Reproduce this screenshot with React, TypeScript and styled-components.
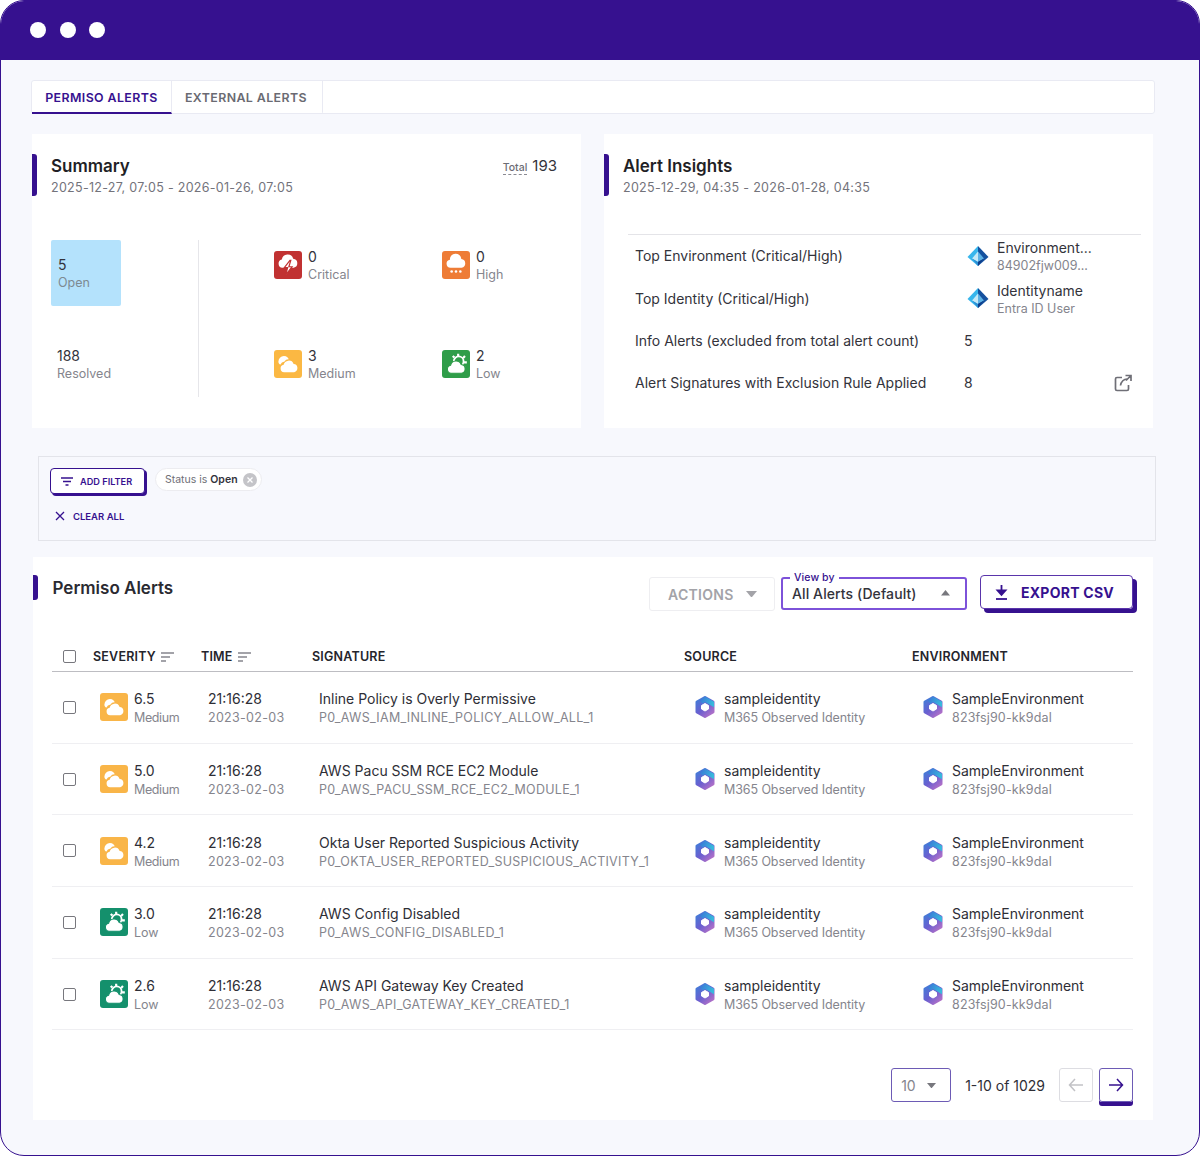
import React from 'react';
import styled, { createGlobalStyle } from 'styled-components';

const PURPLE = '#36118f';

const GlobalStyle = createGlobalStyle`
  html, body { margin: 0; padding: 0; background: #fff; }
  * { box-sizing: border-box; }
  body { font-family: Inter, 'Noto Sans', sans-serif; color: #2b2b33; }
`;

const Frame = styled.div`
  width: 1200px;
  height: 1156px;
  border: 1.5px solid ${PURPLE};
  border-radius: 24px;
  overflow: hidden;
  background: #f7f8fd;
`;

const TitleBar = styled.div`
  height: 59px;
  background: ${PURPLE};
  display: flex;
  align-items: center;
  gap: 13.5px;
  padding: 0 0 2px 29px;
`;

const Dot = styled.span`
  width: 16px;
  height: 16px;
  border-radius: 50%;
  background: #fff;
`;

const Content = styled.div`
  padding: 20px 44px 0 30px;
  display: flex;
  flex-direction: column;
`;

const TabBar = styled.div`
  height: 34px;
  display: flex;
  background: #fff;
  border: 1.5px solid #e9eaf3;
  border-radius: 3px;
`;

const Tab = styled.div<{ $active?: boolean; $width: number }>`
  width: ${({ $width }) => $width}px;
  display: flex;
  align-items: center;
  justify-content: center;
  padding: 2px ${({ $active }) => ($active ? 0 : 2)}px 0 0;
  font-size: 12.4px;
  font-weight: 600;
  letter-spacing: 0.4px;
  color: ${({ $active }) => ($active ? PURPLE : '#6a6a72')};
  border-right: 1.5px solid #e9eaf3;
  border-bottom: 2px solid ${({ $active }) => ($active ? PURPLE : 'transparent')};
  margin-bottom: -1px;
`;

const CardRow = styled.div`
  display: flex;
  gap: 23px;
  margin-top: 20px;
  padding-left: 1px;
`;

const Card = styled.section`
  width: 549px;
  height: 294px;
  background: #fff;
  padding-top: 20px;
  display: flex;
  flex-direction: column;
`;

const CardHead = styled.div`
  display: flex;
  align-items: flex-start;
  padding-right: 24px;
`;

const Accent = styled.span<{ $h?: number }>`
  width: 5px;
  height: ${({ $h }) => $h ?? 42}px;
  background: ${PURPLE};
  border-radius: 0 3px 3px 0;
  flex: none;
`;

const HeadText = styled.div`
  margin-left: 14px;
  flex: 1;
`;

const CardTitle = styled.h2`
  margin: 0;
  font-size: 17px;
  line-height: 24px;
  font-weight: 600;
  color: #1f1f26;
`;

const DateRange = styled.div`
  margin-top: 1px;
  font-size: 12.5px;
  line-height: 18px;
  color: #73737b;
  letter-spacing: 0.29px;
`;

const Total = styled.div`
  display: flex;
  align-items: baseline;
  gap: 5px;
  font-size: 15px;
  line-height: 24px;
  color: #33333b;
`;

const TotalLabel = styled.span`
  font-size: 10.5px;
  font-weight: 500;
  color: #6d6d75;
  border-bottom: 1px dashed #8a8a92;
  line-height: 12px;
`;

const SummaryBody = styled.div`
  display: flex;
  margin-top: 43px;
  padding-left: 19px;
`;

const StatusCol = styled.div`
  width: 148px;
  height: 157px;
  border-right: 1px solid #e6e6ea;
  display: flex;
  flex-direction: column;
  justify-content: space-between;
`;

const StatusBox = styled.div<{ $active?: boolean }>`
  width: 70px;
  height: ${({ $active }) => ($active ? '66px' : 'auto')};
  padding: ${({ $active }) => ($active ? '16px 7px' : '0 6px 14px')};
  background: ${({ $active }) => ($active ? '#b4e2fc' : 'transparent')};
  border-radius: 2px;
`;

const Big = styled.div`
  font-size: 14px;
  line-height: 18px;
  color: #33333b;
`;

const Small = styled.div<{ $dark?: boolean }>`
  font-size: 12.5px;
  line-height: 18px;
  color: ${({ $dark }) => ($dark ? '#7d8a92' : '#85858d')};
`;

const SeverityGrid = styled.div`
  display: grid;
  grid-template-columns: 168px 130px;
  grid-auto-rows: 99px;
  padding: 8px 0 0 75px;
`;

const SeverityItem = styled.div`
  display: flex;
  gap: 6px;
  height: 38px;
`;

const SeverityIconSlot = styled.div`
  padding-top: 3px;
`;

const IconBox = styled.span<{ $color: string }>`
  width: 28px;
  height: 28px;
  border-radius: 3px;
  background: ${({ $color }) => $color};
  display: flex;
  align-items: center;
  justify-content: center;
  flex: none;
`;

const InsightList = styled.div`
  margin: 37px 12px 0 24px;
  border-top: 1px solid #e4e4e8;
  display: flex;
  flex-direction: column;
`;

const InsightRow = styled.div`
  height: 42.4px;
  display: grid;
  grid-template-columns: 329px 1fr auto;
  align-items: center;
  padding: 0 9px 1px 7px;
  font-size: 14px;
  color: #33333b;
`;

const InsightValue = styled.div`
  display: flex;
  align-items: center;
  gap: 7px;
  padding-left: 2px;
`;

const EntityText = styled.div`
  padding-top: 3px;
`;

const EntityName = styled.div`
  font-size: 14px;
  line-height: 18px;
  color: #33333b;
`;

const FilterBox = styled.div`
  margin: 28px -1px 0 7px;
  height: 85px;
  border: 1.5px solid #e3e4ea;
  padding: 11px 11px 0;
  display: flex;
  flex-direction: column;
`;

const FilterTop = styled.div`
  display: flex;
  gap: 10px;
`;

const AddFilter = styled.button`
  width: 95px;
  height: 26px;
  padding: 0 0 0 10px;
  border: 1.5px solid ${PURPLE};
  border-radius: 4px;
  box-shadow: 2px 2px 0 ${PURPLE};
  background: #fff;
  display: flex;
  align-items: center;
  gap: 7px;
  font: 600 9.2px Inter, sans-serif;
  color: ${PURPLE};
`;

const Chip = styled.div`
  width: 107px;
  height: 23px;
  border: 1.5px solid #ececf0;
  border-radius: 12px;
  background: #fff;
  display: flex;
  align-items: center;
  justify-content: space-between;
  padding: 0 4px 0 9px;
  font-size: 10.5px;
  color: #6f6f77;
  b { color: #33333b; font-weight: 600; }
`;

const ClearAll = styled.div`
  margin: 15px 0 0 5px;
  display: flex;
  align-items: center;
  gap: 8px;
  font-size: 9.5px;
  font-weight: 600;
  color: ${PURPLE};
  height: 14px;
`;

const AlertsCard = styled.section`
  margin: 16px 0 0 2px;
  width: 1120px;
  height: 563px;
  background: #fff;
  display: flex;
  flex-direction: column;
`;

const AlertsHead = styled.div`
  height: 54px;
  padding: 18px 20px 0 0;
  display: flex;
  align-items: flex-start;
`;

const AlertsTitle = styled.h2`
  margin: 0 0 0 14.5px;
  font-size: 17px;
  line-height: 26px;
  font-weight: 600;
  color: #2a2a31;
  flex: 1;
`;

const ActionsButton = styled.div`
  width: 126px;
  height: 34px;
  margin-top: 2px;
  border: 1.5px solid #eeeef1;
  border-radius: 3px;
  display: flex;
  align-items: center;
  justify-content: space-between;
  padding: 0 17px 0 18px;
  font-size: 14px;
  font-weight: 600;
  letter-spacing: 0.3px;
  color: #a3a3a8;
`;

const ViewBy = styled.div`
  position: relative;
  width: 186px;
  height: 33px;
  margin: 2px 13px 0 6px;
  border: 2px solid #7d52d9;
  border-radius: 3px;
  display: flex;
  align-items: center;
  justify-content: space-between;
  padding: 0 15px 1px 9px;
  font-size: 14px;
  font-weight: 500;
  letter-spacing: 0.1px;
  color: #33333b;
`;

const ViewByLabel = styled.span`
  position: absolute;
  left: 7px;
  top: -8px;
  padding: 0 4px;
  background: #fff;
  font-size: 10.5px;
  line-height: 13px;
  color: ${PURPLE};
`;

const ExportButton = styled.div`
  width: 153px;
  height: 34px;
  border: 1.5px solid #5a35ab;
  border-radius: 4px;
  box-shadow: 4px 4px 0 ${PURPLE};
  display: flex;
  align-items: center;
  gap: 13px;
  padding-left: 14px;
  font-size: 14px;
  font-weight: 700;
  letter-spacing: 0.25px;
  color: ${PURPLE};
`;

const Table = styled.div`
  margin: 0 20px 0 19px;
`;

const columns = '41px 108px 111px 372px 228px 1fr';

const HeadRow = styled.div`
  display: grid;
  grid-template-columns: ${columns};
  align-items: center;
  height: 61px;
  padding-top: 31px;
  border-bottom: 1.5px solid #bdbdc2;
  font-size: 12.5px;
  font-weight: 600;
  letter-spacing: 0.2px;
  color: #25252c;
`;

const HeadCell = styled.div`
  display: flex;
  align-items: center;
  gap: 5px;
`;

const CheckCell = styled.div`
  padding-left: 11px;
  display: flex;
  align-items: center;
`;

const CheckBox = styled.span`
  width: 13px;
  height: 13px;
  border: 1.5px solid #77777d;
  border-radius: 2px;
`;

const Row = styled.div`
  display: grid;
  grid-template-columns: ${columns};
  align-items: center;
  height: 71.7px;
  border-bottom: 1.5px solid #efeff2;
`;

const Cell = styled.div`
  padding-left: 7px;
  display: flex;
  align-items: center;
  min-width: 0;
`;

const ServiceCell = styled(Cell)`
  padding-left: 10px;
  gap: 8px;
`;

const SeverityCell = styled(Cell)`
  gap: 6px;
`;

const Primary = styled.div`
  margin-top: 3px;
  font-size: 14px;
  line-height: 18px;
  color: #2e2e36;
`;

const Secondary = styled.div<{ $spacing?: number }>`
  margin-top: 1px;
  font-size: 12.5px;
  line-height: 18px;
  letter-spacing: ${({ $spacing }) => $spacing ?? 0}px;
  color: #85858d;
  white-space: nowrap;
`;

const Pager = styled.div`
  display: flex;
  align-items: center;
  justify-content: flex-end;
  margin: 38px 20px 0 0;
  height: 34px;
`;

const PageSize = styled.div`
  width: 60px;
  height: 34px;
  border: 1.5px solid #6d5bb5;
  border-radius: 3px;
  display: flex;
  align-items: center;
  justify-content: space-between;
  padding: 0 14px 0 9px;
  font-size: 14px;
  color: #85858d;
`;

const PageCount = styled.div`
  margin: 0 14px;
  font-size: 14px;
  color: #2e2e36;
  white-space: nowrap;
`;

const PageButton = styled.div<{ $active?: boolean }>`
  width: 34px;
  height: 34px;
  margin-left: ${({ $active }) => ($active ? '6px' : '0')};
  border: 1.5px solid ${({ $active }) => ($active ? '#6d5bb5' : '#dddde2')};
  border-radius: 3px;
  box-shadow: ${({ $active }) => ($active ? `0 4px 0 ${PURPLE}` : 'none')};
  display: flex;
  align-items: center;
  justify-content: center;
`;

type Level = 'critical' | 'high' | 'medium' | 'low';

const SeverityIcon = ({ level, table }: { level: Level; table?: boolean }) => {
  const colors: Record<Level, string> = {
    critical: '#c13232',
    high: '#ee7c36',
    medium: table ? '#f9b548' : '#fbb843',
    low: table ? '#14906c' : '#2f9d49',
  };
  const color = colors[level];
  return (
    <IconBox $color={color}>
      <svg width="26" height="26" viewBox="0 0 24 24" fill="#fff">
        {level === 'critical' && (
          <>
            <path d="M6.800 14.500a3.800 3.800 0 0 1-.5-7.500A5.400 5.400 0 0 1 16.800 6.200a4.200 4.200 0 0 1 .4 8.300z" />
            <path d="M13.800 7.800l-5.200 6.700h3L10 21.200l5.800-7.600h-3l1.800-5.800z" stroke={color} strokeWidth="1.100" />
          </>
        )}
        {level === 'high' && (
          <>
            <path d="M6.900 14.500a3.700 3.700 0 0 1-.5-7.350A5.200 5.200 0 0 1 16.900 6.400a4.100 4.100 0 0 1 .3 8.100z" />
            <circle cx="8" cy="18" r="1.200" />
            <circle cx="12" cy="18" r="1.200" />
            <circle cx="16" cy="18" r="1.200" />
          </>
        )}
        {level === 'medium' && (
          <>
            <path d="M3.600 11.600A5 5 0 0 1 12.800 7.600a4 4 0 0 0-4 2.200 5 5 0 0 0-4 2.800z" />
            <path d="M8.400 19.500a3.400 3.400 0 0 1-.4-6.750A4.800 4.800 0 0 1 17.200 12a3.800 3.800 0 0 1 .5 7.500z" />
          </>
        )}
        {level === 'low' && (
          <>
            <circle cx="14.500" cy="9.500" r="4.500" fill="none" stroke="#fff" strokeWidth="1.700" />
            <path d="M14 2.500v2.400M20.300 4.600L18.600 6.400M22 10.500h-2.600M20 15.400l-1.700-1.300M9 4.600l1.500 1.500" stroke="#fff" strokeWidth="2" />
            <path d="M7.400 20.500a3.700 3.700 0 0 1-.4-7.300A5.200 5.200 0 0 1 16.800 12.400a4.100 4.100 0 0 1 .3 8.100z" stroke={color} strokeWidth="1" />
          </>
        )}
      </svg>
    </IconBox>
  );
};

const M365Icon = () => (
  <svg width="22" height="24" viewBox="0 0 22 24" style={{ flex: 'none' }}>
    <defs>
      <linearGradient id="hexA" x1="0" y1="0" x2="0.8" y2="1">
        <stop offset="0" stopColor="#3f7fd8" />
        <stop offset="0.55" stopColor="#6a5fd0" />
        <stop offset="1" stopColor="#b070c8" />
      </linearGradient>
      <linearGradient id="hexB" x1="0" y1="0" x2="1" y2="0.4">
        <stop offset="0" stopColor="#3b6fd6" />
        <stop offset="1" stopColor="#38b7dc" />
      </linearGradient>
    </defs>
    <path d="M11 2.500l8 4.600v9.800l-8 4.600-8-4.600V7.100z" fill="url(#hexA)" stroke="url(#hexA)" strokeWidth="3" strokeLinejoin="round" />
    <path d="M11 1.500l9 5.200v5.500l-5-2.900-4-2.300-2.500 1.400-3-2.900z" fill="url(#hexB)" />
    <path d="M11 8.500l3.500 2v3.500L11 16l-3.500-2v-3.500z" fill="#fff" stroke="#fff" strokeWidth="1" strokeLinejoin="round" />
  </svg>
);

const EntraIcon = () => (
  <svg width="24" height="24" viewBox="0 0 24 24" style={{ flex: 'none' }}>
    <path d="M12 2L1.500 13 12 22z" fill="#38b6ec" />
    <path d="M12 2l10.500 11L12 22z" fill="#14519f" />
    <path d="M12 7.500L6 14.500l6 3.500z" fill="#c5e9f7" />
    <path d="M12 7.500l6 7-6 3.500z" fill="#5cb1e4" />
    <path d="M6 14.500l6 3.500v4z" fill="#2a8fd6" />
    <path d="M18 14.500l-6 3.500v4z" fill="#0e3d8a" />
  </svg>
);

const Caret = ({ up, color = '#85858d', width = 10 }: { up?: boolean; color?: string; width?: number }) => (
  <svg width={width} height={width * 0.6} viewBox="0 0 10 6">
    <path d={up ? 'M5 0l5 6H0z' : 'M0 0h10L5 6z'} fill={color} />
  </svg>
);

const SortIcon = () => (
  <svg width="13" height="10" viewBox="0 0 13 10">
    <path d="M0 1h13M0 5h9M0 9h5" stroke="#85858d" strokeWidth="1.300" />
  </svg>
);

const statuses: { level: Level; count: number; label: string }[] = [
  { level: 'critical', count: 0, label: 'Critical' },
  { level: 'high', count: 0, label: 'High' },
  { level: 'medium', count: 3, label: 'Medium' },
  { level: 'low', count: 2, label: 'Low' },
];

const alerts: { score: string; level: Level; label: string; title: string; code: string }[] = [
  { score: '6.5', level: 'medium', label: 'Medium', title: 'Inline Policy is Overly Permissive', code: 'P0_AWS_IAM_INLINE_POLICY_ALLOW_ALL_1' },
  { score: '5.0', level: 'medium', label: 'Medium', title: 'AWS Pacu SSM RCE EC2 Module', code: 'P0_AWS_PACU_SSM_RCE_EC2_MODULE_1' },
  { score: '4.2', level: 'medium', label: 'Medium', title: 'Okta User Reported Suspicious Activity', code: 'P0_OKTA_USER_REPORTED_SUSPICIOUS_ACTIVITY_1' },
  { score: '3.0', level: 'low', label: 'Low', title: 'AWS Config Disabled', code: 'P0_AWS_CONFIG_DISABLED_1' },
  { score: '2.6', level: 'low', label: 'Low', title: 'AWS API Gateway Key Created', code: 'P0_AWS_API_GATEWAY_KEY_CREATED_1' },
];

export default function App() {
  return (
    <>
      <GlobalStyle />
      <Frame>
        <TitleBar>
          <Dot />
          <Dot />
          <Dot />
        </TitleBar>
        <Content>
          <TabBar>
            <Tab $active $width={140}>PERMISO ALERTS</Tab>
            <Tab $width={151}>EXTERNAL ALERTS</Tab>
          </TabBar>

          <CardRow>
            <Card>
              <CardHead>
                <Accent />
                <HeadText>
                  <CardTitle>Summary</CardTitle>
                  <DateRange>2025-12-27, 07:05 - 2026-01-26, 07:05</DateRange>
                </HeadText>
                <Total>
                  <TotalLabel>Total</TotalLabel>
                  193
                </Total>
              </CardHead>
              <SummaryBody>
                <StatusCol>
                  <StatusBox $active>
                    <Big>5</Big>
                    <Small $dark>Open</Small>
                  </StatusBox>
                  <StatusBox>
                    <Big>188</Big>
                    <Small>Resolved</Small>
                  </StatusBox>
                </StatusCol>
                <SeverityGrid>
                  {statuses.map((s) => (
                    <SeverityItem key={s.label}>
                      <SeverityIconSlot>
                        <SeverityIcon level={s.level} />
                      </SeverityIconSlot>
                      <div>
                        <Big>{s.count}</Big>
                        <Small>{s.label}</Small>
                      </div>
                    </SeverityItem>
                  ))}
                </SeverityGrid>
              </SummaryBody>
            </Card>

            <Card>
              <CardHead>
                <Accent />
                <HeadText>
                  <CardTitle>Alert Insights</CardTitle>
                  <DateRange>2025-12-29, 04:35 - 2026-01-28, 04:35</DateRange>
                </HeadText>
              </CardHead>
              <InsightList>
                <InsightRow>
                  <span>Top Environment (Critical/High)</span>
                  <InsightValue>
                    <EntraIcon />
                    <EntityText>
                      <EntityName>Environment...</EntityName>
                      <Small>84902fjw009...</Small>
                    </EntityText>
                  </InsightValue>
                </InsightRow>
                <InsightRow>
                  <span>Top Identity (Critical/High)</span>
                  <InsightValue>
                    <EntraIcon />
                    <EntityText>
                      <EntityName>Identityname</EntityName>
                      <Small>Entra ID User</Small>
                    </EntityText>
                  </InsightValue>
                </InsightRow>
                <InsightRow>
                  <span>Info Alerts (excluded from total alert count)</span>
                  <span>5</span>
                </InsightRow>
                <InsightRow>
                  <span>Alert Signatures with Exclusion Rule Applied</span>
                  <span>8</span>
                  <svg width="18" height="18" viewBox="0 0 18 18" fill="none" stroke="#6f6f77" strokeWidth="1.700">
                    <path d="M8 3.500H3a1.500 1.500 0 0 0-1.500 1.500v10A1.500 1.500 0 0 0 3 16.500h10a1.500 1.500 0 0 0 1.500-1.500v-4" />
                    <path d="M6.500 11.500C7 7.500 10 5 13 5M11.500 1.500h5.500v5.500M16.500 2L12 6.500" />
                  </svg>
                </InsightRow>
              </InsightList>
            </Card>
          </CardRow>

          <FilterBox>
            <FilterTop>
              <AddFilter>
                <svg width="12" height="9" viewBox="0 0 12 9">
                  <path d="M0 1h12M2 4.500h8M4.500 8h3" stroke={PURPLE} strokeWidth="1.300" />
                </svg>
                ADD FILTER
              </AddFilter>
              <Chip>
                <span>
                  Status is <b>Open</b>
                </span>
                <svg width="14" height="14" viewBox="0 0 14 14">
                  <circle cx="7" cy="7" r="7" fill="#c4c4c8" />
                  <path d="M4.500 4.500l5 5M9.500 4.500l-5 5" stroke="#fff" strokeWidth="1.300" />
                </svg>
              </Chip>
            </FilterTop>
            <ClearAll>
              <svg width="10" height="10" viewBox="0 0 10 10">
                <path d="M1 1l8 8M9 1L1 9" stroke={PURPLE} strokeWidth="1.300" />
              </svg>
              CLEAR ALL
            </ClearAll>
          </FilterBox>

          <AlertsCard>
            <AlertsHead>
              <Accent $h={25} />
              <AlertsTitle>Permiso Alerts</AlertsTitle>
              <ActionsButton>
                ACTIONS
                <Caret width={11} color="#a3a3a8" />
              </ActionsButton>
              <ViewBy>
                <ViewByLabel>View by</ViewByLabel>
                All Alerts (Default)
                <Caret up width={9} color="#77777d" />
              </ViewBy>
              <ExportButton>
                <svg width="13" height="15" viewBox="0 0 13 15">
                  <path d="M6.500 0v8M2.500 5.500l4 4.500 4-4.500z" stroke={PURPLE} strokeWidth="1.800" fill={PURPLE} />
                  <path d="M1 14h11" stroke={PURPLE} strokeWidth="1.800" />
                </svg>
                EXPORT CSV
              </ExportButton>
            </AlertsHead>

            <Table>
              <HeadRow>
                <CheckCell>
                  <CheckBox />
                </CheckCell>
                <HeadCell>
                  SEVERITY <SortIcon />
                </HeadCell>
                <HeadCell>
                  TIME <SortIcon />
                </HeadCell>
                <HeadCell>SIGNATURE</HeadCell>
                <HeadCell>SOURCE</HeadCell>
                <HeadCell>ENVIRONMENT</HeadCell>
              </HeadRow>
              {alerts.map((a) => (
                <Row key={a.code}>
                  <CheckCell>
                    <CheckBox />
                  </CheckCell>
                  <SeverityCell>
                    <SeverityIcon level={a.level} table />
                    <div>
                      <Primary>{a.score}</Primary>
                      <Secondary $spacing={a.level === 'medium' ? -0.4 : 0}>{a.label}</Secondary>
                    </div>
                  </SeverityCell>
                  <Cell>
                    <div>
                      <Primary>21:16:28</Primary>
                      <Secondary $spacing={0.3}>2023-02-03</Secondary>
                    </div>
                  </Cell>
                  <Cell>
                    <div>
                      <Primary>{a.title}</Primary>
                      <Secondary $spacing={0.28}>{a.code}</Secondary>
                    </div>
                  </Cell>
                  <ServiceCell>
                    <M365Icon />
                    <div>
                      <Primary>sampleidentity</Primary>
                      <Secondary $spacing={-0.1}>M365 Observed Identity</Secondary>
                    </div>
                  </ServiceCell>
                  <ServiceCell>
                    <M365Icon />
                    <div>
                      <Primary>SampleEnvironment</Primary>
                      <Secondary $spacing={0.15}>823fsj90-kk9dal</Secondary>
                    </div>
                  </ServiceCell>
                </Row>
              ))}
            </Table>

            <Pager>
              <PageSize>
                10
                <Caret width={9} color="#77777d" />
              </PageSize>
              <PageCount>1-10 of 1029</PageCount>
              <PageButton>
                <svg width="16" height="14" viewBox="0 0 16 14" fill="none" stroke="#c2c2c6" strokeWidth="1.500">
                  <path d="M15 7H1.500M7 1L1.500 7 7 13" />
                </svg>
              </PageButton>
              <PageButton $active>
                <svg width="16" height="14" viewBox="0 0 16 14" fill="none" stroke={PURPLE} strokeWidth="1.500">
                  <path d="M1 7h13.500M9 1l5.500 6L9 13" />
                </svg>
              </PageButton>
            </Pager>
          </AlertsCard>
        </Content>
      </Frame>
    </>
  );
}
